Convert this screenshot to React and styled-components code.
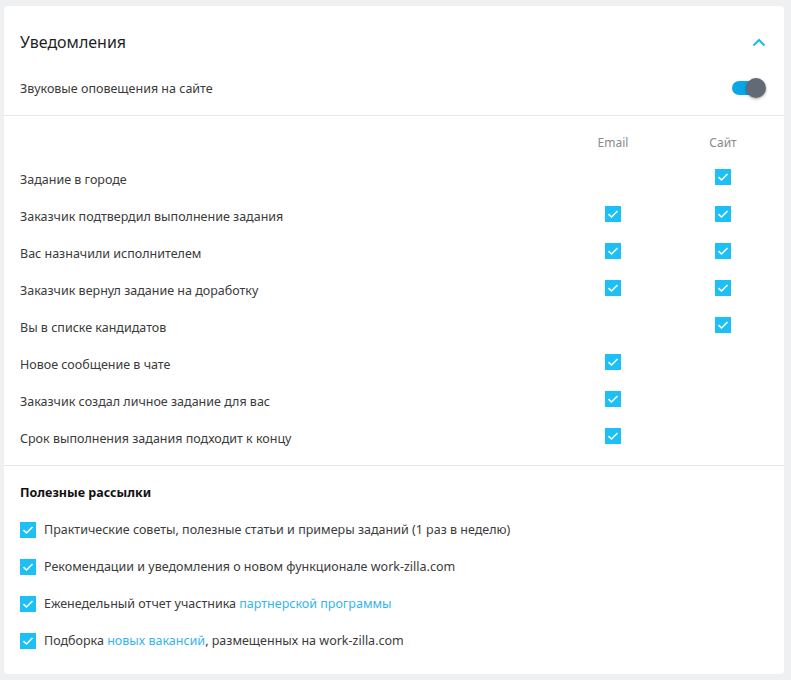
import { Fragment, useState } from 'react';
import styled, { createGlobalStyle } from 'styled-components';

const GlobalStyle = createGlobalStyle`
  html, body {
    margin: 0;
    background: #eef0f2;
  }
  body {
    padding: 6px 7px 6px 4px;
    font-family: "Noto Sans", "Open Sans", sans-serif;
    color: #3b3b3b;
  }
`;

const Card = styled.div`
  width: 780px;
  height: 668px;
  background: #fff;
  border-radius: 4px;
  box-sizing: border-box;
`;

const Section = styled.div`
  padding: ${(p) => p.$pad};
  border-bottom: ${(p) => (p.$last ? 'none' : '1px solid #e4e6e8')};
`;

const HeaderRow = styled.div`
  display: flex;
  align-items: center;
  justify-content: space-between;
  height: 24px;
  margin-bottom: ${(p) => p.$gap || 0}px;
`;

const Title = styled.h2`
  margin: 0;
  font-size: 16px;
  font-weight: 400;
  color: #1f1f1f;
`;

const Label = styled.span`
  font-size: 12.5px;
  color: #3b3b3b;
`;

const ChevronButton = styled.button`
  border: none;
  background: none;
  padding: 0;
  display: flex;
  cursor: pointer;
`;

const ToggleWrap = styled.button`
  position: relative;
  width: 34px;
  height: 20px;
  border: none;
  background: none;
  padding: 0;
  cursor: pointer;
`;

const Track = styled.span`
  position: absolute;
  left: 0;
  top: 3px;
  width: 28px;
  height: 14px;
  border-radius: 7px;
  background: ${(p) => (p.$on ? '#0ba6e4' : '#c7ccd1')};
`;

const Knob = styled.span`
  position: absolute;
  top: 0;
  left: ${(p) => (p.$on ? '14px' : '0')};
  width: 20px;
  height: 20px;
  border-radius: 50%;
  background: #636a76;
  box-shadow: 0 1px 3px rgba(0, 0, 0, 0.35);
`;

const Grid = styled.div`
  display: grid;
  grid-template-columns: 1fr 60px 60px;
  column-gap: 50px;
  grid-auto-rows: 37px;
  align-items: center;
`;

const ColHead = styled.div`
  text-align: center;
  font-size: 12px;
  color: #8a8a8a;
`;

const Cell = styled.div`
  display: flex;
  justify-content: center;
  margin-bottom: 6px;
`;

const Box = styled.span`
  width: 16px;
  height: 16px;
  flex: none;
  background: #1cc0f7;
  display: flex;
  align-items: center;
  justify-content: center;
  cursor: pointer;
`;

const SubTitle = styled.div`
  height: 37px;
  display: flex;
  align-items: center;
  font-size: 12.5px;
  font-weight: 700;
  color: #111;
`;

const MailRow = styled.label`
  height: 37px;
  display: flex;
  align-items: center;
  gap: 8px;
  font-size: 12.5px;
  color: #3b3b3b;
`;

const Link = styled.a`
  color: #35b4ef;
  text-decoration: none;
`;

const Check = () => (
  <Box>
    <svg width="12" height="10" viewBox="0 0 12 10">
      <path d="M1.5 5.2 L4.5 8 L10.5 2" fill="none" stroke="#fff" strokeWidth="1.6" />
    </svg>
  </Box>
);

const rows = [
  ['Задание в городе', false, true],
  ['Заказчик подтвердил выполнение задания', true, true],
  ['Вас назначили исполнителем', true, true],
  ['Заказчик вернул задание на доработку', true, true],
  ['Вы в списке кандидатов', false, true],
  ['Новое сообщение в чате', true, false],
  ['Заказчик создал личное задание для вас', true, false],
  ['Срок выполнения задания подходит к концу', true, false],
];

const App = () => {
  const [sound, setSound] = useState(true);

  return (
    <>
      <GlobalStyle />
      <Card>
        <Section $pad="24px 18px 15px 16px">
          <HeaderRow $gap={22}>
            <Title>Уведомления</Title>
            <ChevronButton>
              <svg width="14" height="9" viewBox="0 0 14 9">
                <path d="M1.5 7.5 L7 2 L12.5 7.5" fill="none" stroke="#1ab9f2" strokeWidth="2" />
              </svg>
            </ChevronButton>
          </HeaderRow>
          <HeaderRow>
            <Label>Звуковые оповещения на сайте</Label>
            <ToggleWrap onClick={() => setSound(!sound)}>
              <Track $on={sound} />
              <Knob $on={sound} />
            </ToggleWrap>
          </HeaderRow>
        </Section>

        <Section $pad="8px 31px 8px 16px">
          <Grid>
            <span />
            <ColHead>Email</ColHead>
            <ColHead>Сайт</ColHead>
            {rows.map(([name, email, site]) => (
              <Fragment key={name}>
                <Label>{name}</Label>
                <Cell>{email && <Check />}</Cell>
                <Cell>{site && <Check />}</Cell>
              </Fragment>
            ))}
          </Grid>
        </Section>

        <Section $pad="8px 16px 14px 16px" $last>
          <SubTitle>Полезные рассылки</SubTitle>
          <MailRow>
            <Check />
            Практические советы, полезные статьи и примеры заданий (1 раз в неделю)
          </MailRow>
          <MailRow>
            <Check />
            Рекомендации и уведомления о новом функционале work-zilla.com
          </MailRow>
          <MailRow>
            <Check />
            <span>
              Еженедельный отчет участника <Link href="#">партнерской программы</Link>
            </span>
          </MailRow>
          <MailRow>
            <Check />
            <span>
              Подборка <Link href="#">новых вакансий</Link>, размещенных на work-zilla.com
            </span>
          </MailRow>
        </Section>
      </Card>
    </>
  );
};

export default App;
